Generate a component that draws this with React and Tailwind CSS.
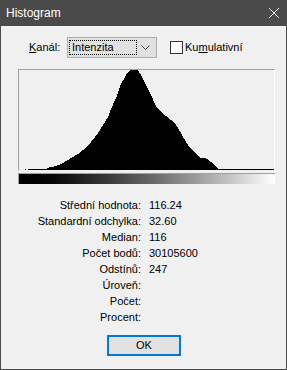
import React from 'react';

const font = { fontFamily: '"Liberation Sans", Arial, sans-serif' };

// histogram outline in page coords (inner box starts at 18,71)
const peak = [
  [46, 171], [46, 169], [50, 168], [55, 167], [60, 165], [67, 161], [77, 155],
  [87, 147], [97, 134], [107, 118], [110, 110], [115, 99], [120, 85], [124, 78],
  [127, 73], [130, 71], [137, 71], [140, 76], [145, 86], [150, 96], [155, 107],
  [160, 113], [170, 121], [175, 126], [180, 134], [185, 143], [190, 150], [195, 155],
  [200, 159], [203, 159], [206, 160], [210, 163], [213, 166], [217, 169], [217, 171],
];

const stats = [
  ['Střední hodnota:', '116.24'],
  ['Standardní odchylka:', '32.60'],
  ['Median:', '116'],
  ['Počet bodů:', '30105600'],
  ['Odstínů:', '247'],
  ['Úroveň:', ''],
  ['Počet:', ''],
  ['Procent:', ''],
];

function Chart() {
  const pts = peak.map(([x, y]) => `${x - 18},${y - 71}`).join(' ');
  return (
    <div className="ml-[17px] w-[257px] h-[102px] border-t border-l border-[#a0a0a0] border-r border-r-white border-b border-b-[#f0f0f0]">
      <svg width="255" height="100" viewBox="0 0 255 100" shapeRendering="crispEdges" className="block">
        <polygon points={pts} fill="#000" />
        <rect x={27 - 18} y={99} width={273 - 27} height={1} fill="#000" />
        <rect x={24 - 18} y={99} width={1} height={1} fill="#000" />
      </svg>
    </div>
  );
}

export default function App() {
  return (
    <div className="w-[287px] h-[370px] flex flex-col bg-[#4a4a4a] text-[11px] text-black" style={font}>
      {/* title bar */}
      <div className="h-[26px] flex items-center justify-between pl-[6px] pr-[7px] text-white shrink-0">
        <span className="text-[12px]">Histogram</span>
        <svg width="12" height="12" viewBox="0 0 12 12">
          <path d="M1 1 L11 11 M11 1 L1 11" stroke="#fff" strokeWidth="1" />
        </svg>
      </div>

      <div className="flex-1 mx-px mb-px bg-[#f0f0f0] flex flex-col">
        {/* controls */}
        <div className="flex items-center mt-[11px] h-[21px]">
          <span className="ml-[28px] w-[38px]"><span className="underline">K</span>anál:</span>
          <div className="w-[90px] h-[21px] bg-[#e1e1e1] border border-[#adadad] flex items-center pl-[1px] pr-[6px]">
            <div className="h-[15px] w-[68px] border border-dotted border-black flex items-center pl-[2px]">Intenzita</div>
            <svg width="9" height="5" viewBox="0 0 9 5" className="ml-auto">
              <path d="M0.5 0.5 L4.5 4.5 L8.5 0.5" stroke="#444" fill="none" strokeWidth="1" />
            </svg>
          </div>
          <div className="ml-[13px] w-[13px] h-[13px] bg-white border border-[#333]" />
          <span className="ml-[2px]">Ku<span className="underline">m</span>ulativní</span>
        </div>

        <div className="mt-[11px]"><Chart /></div>

        {/* gradient */}
        <div className="ml-[17px] mt-[2px] w-[257px] h-[11px] border-t border-l border-[#a0a0a0] bg-gradient-to-r from-black to-white" />

        {/* stats */}
        <div className="mt-[13px] flex flex-col">
          {stats.map(([k, v]) => (
            <div key={k} className="flex h-[16px] items-center">
              <span className="w-[140px] text-right">{k}</span>
              <span className="ml-[8px]">{v}</span>
            </div>
          ))}
        </div>

        <div className="mt-[10px] ml-[106px] w-[74px] h-[21px] border-2 border-[#0078d7] bg-[#e1e1e1] flex items-center justify-center">OK</div>
      </div>
    </div>
  );
}
